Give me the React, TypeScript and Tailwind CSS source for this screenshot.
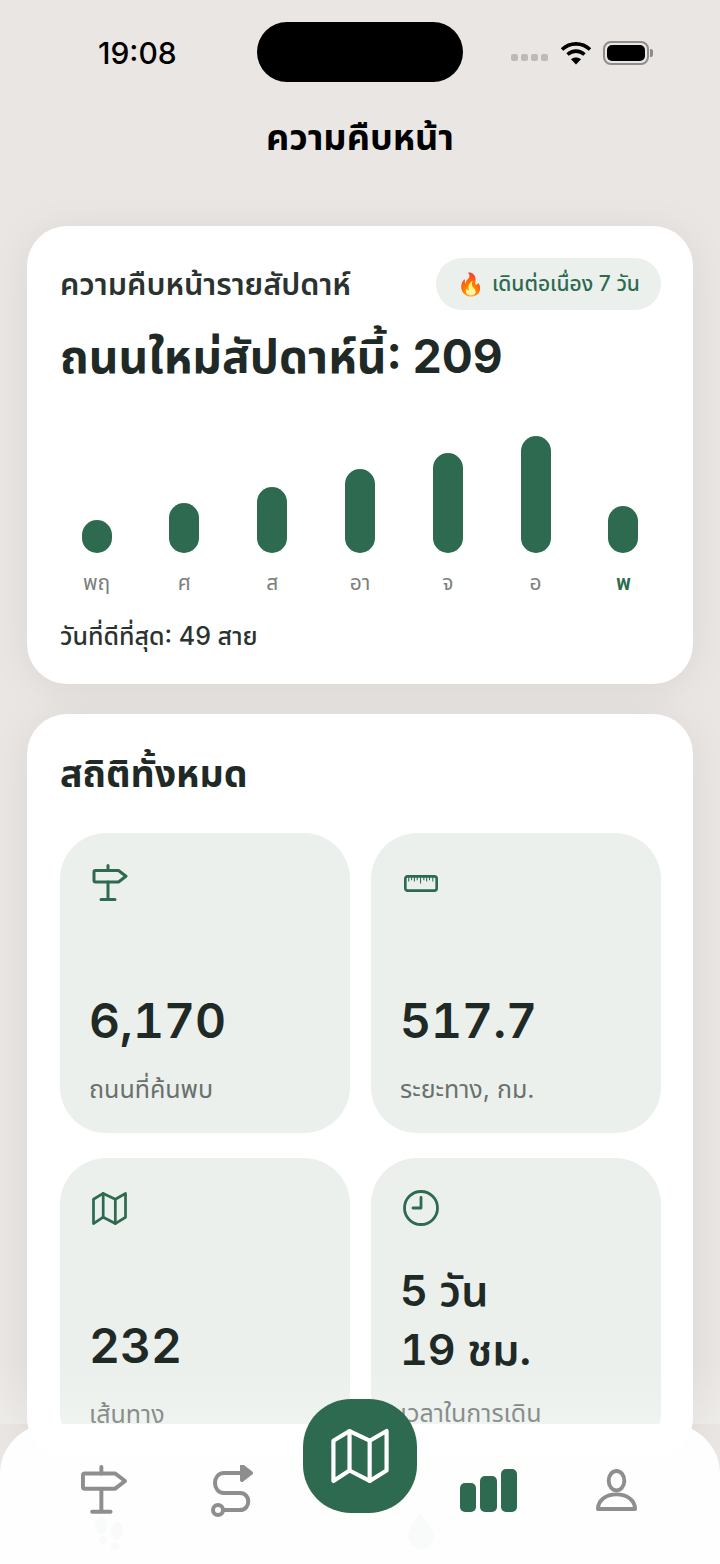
import type { ReactNode } from 'react'

const BARS = [
  { label: 'พฤ', height: 33 },
  { label: 'ศ', height: 50 },
  { label: 'ส', height: 66 },
  { label: 'อา', height: 84 },
  { label: 'จ', height: 100 },
  { label: 'อ', height: 117 },
  { label: 'พ', height: 47, today: true },
]

function SignIcon({ className }: { className?: string }) {
  return (
    <svg viewBox="0 0 36 38" fill="none" stroke="currentColor" strokeWidth="3" strokeLinecap="round" strokeLinejoin="round" className={className}>
      <path d="M16 1.5v5M16 18v17.5M9 35.5h14" />
      <path d="M2 8a1.5 1.5 0 0 1 1.5-1.5H26.5L34 12.2 26.5 18H3.5A1.5 1.5 0 0 1 2 16.5z" />
    </svg>
  )
}

function MapIcon({ className, strokeWidth = 2.8 }: { className?: string; strokeWidth?: number }) {
  return (
    <svg viewBox="0 0 36 34" fill="none" stroke="currentColor" strokeWidth={strokeWidth} strokeLinecap="round" strokeLinejoin="round" className={className}>
      <path d="M1.5 7.5 11.5 1.5 24 7.5 34.5 1.5v24.5L24 32.5 11.5 26 1.5 32.5z" />
      <path d="M11.5 1.5V26M24 7.5v25" />
    </svg>
  )
}

function RulerIcon() {
  return (
    <svg viewBox="0 0 36 18" fill="none" stroke="currentColor" className="h-[17px] w-9 text-[#2D6A4F]">
      <rect x="1.4" y="1.4" width="33.2" height="15.2" rx="2.5" strokeWidth="2.8" />
      <path d="M5 2v5M8 2v3.5M11 2v5M14 2v3.5M17.5 2v7M21 2v3.5M24 2v5M27 2v3.5M30.5 2v5" strokeWidth="1.1" />
    </svg>
  )
}

function ClockIcon() {
  return (
    <svg viewBox="0 0 36 36" fill="none" stroke="currentColor" strokeWidth="2.8" strokeLinecap="round" strokeLinejoin="round" className="h-9 w-9 text-[#2D6A4F]">
      <circle cx="18" cy="18" r="16.5" />
      <path d="M18 7.5V18h-8" />
    </svg>
  )
}

function StatTile({ icon, value, label, tall }: { icon: ReactNode; value: ReactNode; label: string; tall?: boolean }) {
  return (
    <div className="flex h-[300px] flex-col rounded-[46px] bg-[#EBF0EC] px-[29px] pt-[32px]">
      <div className="flex h-9 items-center pl-[3px]">{icon}</div>
      <div className={`${tall ? 'mt-[35px] text-[43px] leading-[59px]' : 'mt-[89px] text-[48px] leading-[62px]'} font-semibold tabular-nums text-[#1F2A26]`}>
        {value}
      </div>
      <div className={`${tall ? 'mt-[18px]' : 'mt-[21px]'} text-[25px] leading-[32px] text-[#6A706D]`}>{label}</div>
    </div>
  )
}

export default function App() {
  return (
    <div
      className="relative h-[1564px] w-[720px] overflow-hidden bg-[#E9E6E3]"
      style={{ fontFamily: 'Inter, "Noto Sans", "Noto Sans Thai", sans-serif' }}
    >
      {/* Status bar */}
      <div className="flex h-[105px] items-start justify-between pl-[98px] pr-[67px] pt-[22px]">
        <span className="mt-[14px] text-[30px] font-medium leading-[34px] text-black">19:08</span>
        <div className="absolute left-[257px] top-[22px] h-[60px] w-[206px] rounded-[30px] bg-black" />
        <div className="flex items-center">
          <div className="mt-[28px] flex gap-[3px]">
            {[0, 1, 2, 3].map(i => (
              <span key={i} className="h-[7px] w-[7px] rounded-[2px] bg-[#BDBBB9]" />
            ))}
          </div>
          <svg viewBox="0 0 32 24" className="ml-[12px] mt-[18px] h-[24px] w-[32px]" fill="none" stroke="#000" strokeWidth="3.6">
            <path d="M2 8.5c8-7.5 20-7.5 28 0" />
            <path d="M7.5 13.5c5-4.5 12-4.5 17 0" />
            <path d="M16 23.5l-5-5.2c2.8-2.4 7.2-2.4 10 0z" fill="#000" stroke="none" />
          </svg>
          <div className="ml-[11px] mt-[19px] flex items-center">
            <div className="h-[24px] w-[46px] rounded-[8px] border-2 border-[#8E8D8B] p-[2px]">
              <div className="h-full w-full rounded-[5px] bg-black" />
            </div>
            <div className="ml-[1px] h-[8px] w-[3px] rounded-r-[2px] bg-[#8E8D8B]" />
          </div>
        </div>
      </div>

      <h1 className="mt-[8px] text-center text-[36px] font-bold leading-[48px] text-black">ความคืบหน้า</h1>

      <div className="mt-[65px] flex flex-col gap-[30px] pl-[27px] pr-[27px]">
        {/* Weekly progress */}
        <section className="h-[458px] rounded-[40px] bg-white pl-[33px] pr-[32px] pt-[32px] shadow-[0_4px_40px_rgba(0,0,0,0.07)]">
          <div className="flex items-center justify-between">
            <h2 className="text-[30.5px] font-semibold leading-[52px] text-[#2A3330]">ความคืบหน้ารายสัปดาห์</h2>
            <div className="flex h-[52px] w-[225px] items-center justify-center gap-[8px] rounded-full bg-[#EBF0EC]">
              <span className="text-[22px] leading-none">🔥</span>
              <span className="text-[21px] font-medium text-[#2D6A4F]">เดินต่อเนื่อง 7 วัน</span>
            </div>
          </div>
          <p className="mt-[15px] text-[46px] font-bold leading-[62px] text-[#1F2A26]">ถนนใหม่สัปดาห์นี้: 209</p>
          <div className="mt-[48px] flex justify-between pl-[6.5px] pr-[7.5px]">
            {BARS.map(bar => (
              <div key={bar.label} className="flex w-[60px] flex-col items-center">
                <div className="flex h-[118px] items-end">
                  <div className="w-[30px] rounded-[15px] bg-[#2D6A4F]" style={{ height: bar.height }} />
                </div>
                <span className={`mt-[14px] text-[21px] leading-[32px] ${bar.today ? 'font-semibold text-[#2D6A4F]' : 'text-[#7B807D]'}`}>
                  {bar.label}
                </span>
              </div>
            ))}
          </div>
          <p className="mt-[19px] text-[25px] font-medium leading-[36px] text-[#2A3330]">วันที่ดีที่สุด: 49 สาย</p>
        </section>

        {/* Totals */}
        <section className="rounded-[40px] bg-white pl-[33px] pr-[32px] pt-[30px] shadow-[0_4px_40px_rgba(0,0,0,0.07)]">
          <h2 className="text-[37.5px] font-bold leading-[60px] text-[#1F2A26]">สถิติทั้งหมด</h2>
          <div className="mt-[29px] grid grid-cols-2 gap-x-[21px] gap-y-[25px]">
            <StatTile icon={<SignIcon className="h-[38px] w-9 text-[#2D6A4F]" />} value="6,170" label="ถนนที่ค้นพบ" />
            <StatTile icon={<RulerIcon />} value="517.7" label="ระยะทาง, กม." />
            <StatTile icon={<MapIcon className="h-[33px] w-[35px] text-[#2D6A4F]" />} value="232" label="เส้นทาง" />
            <StatTile
              icon={<ClockIcon />}
              value={<>5 วัน<br />19 ชม.</>}
              label="เวลาในการเดิน"
              tall
            />
          </div>
        </section>
      </div>

      {/* Fade above the tab bar */}
      <div className="absolute inset-x-0 bottom-[140px] h-[60px] bg-gradient-to-b from-white/0 to-white/25" />

      {/* Bottom tab bar */}
      <nav className="absolute inset-x-0 bottom-0 grid h-[140px] grid-cols-5 justify-items-center rounded-t-[50px] bg-white/95 px-[40px] pt-[41px]">
        <SignIcon className="h-[50px] w-[48px] text-[#8E8E8E]" />
        <svg viewBox="0 0 44 52" fill="none" stroke="#8E8E8E" strokeWidth="4" strokeLinecap="round" strokeLinejoin="round" className="h-[52px] w-[44px]">
          <path d="M32 8H14C2 8 2 28 14 28h16c11 0 11 17 0 17H14" />
          <circle cx="8" cy="45" r="5" />
          <path d="M32 1l9 7-9 7z" fill="#8E8E8E" />
        </svg>
        <div />
        <div className="mt-[4px] flex h-[43px] items-end gap-[4px]">
          <div className="h-[29px] w-[16px] rounded-[5px] bg-[#2D6A4F]" />
          <div className="h-[36px] w-[17px] rounded-[5px] bg-[#2D6A4F]" />
          <div className="h-[43px] w-[16px] rounded-[5px] bg-[#2D6A4F]" />
        </div>
        <svg viewBox="0 0 42 44" fill="none" stroke="#8E8E8E" strokeWidth="4" strokeLinejoin="round" className="mt-[4px] h-[43px] w-[41px]">
          <ellipse cx="21" cy="12" rx="8" ry="10" />
          <path d="M2 41c0-9 8-15 19-15s19 6 19 15z" />
        </svg>

        {/* Faint icons bleeding through the bar */}
        <svg viewBox="0 0 34 34" fill="#F9FAFA" className="absolute left-[92px] top-[93px] h-[34px] w-[34px]">
          <ellipse cx="9" cy="9" rx="6" ry="9" />
          <ellipse cx="11" cy="23" rx="4" ry="4" />
          <ellipse cx="25" cy="14" rx="6" ry="9" />
          <ellipse cx="23" cy="29" rx="4" ry="4" />
        </svg>
        <svg viewBox="0 0 30 38" fill="#F9FAFA" className="absolute left-[406px] top-[88px] h-[38px] w-[30px]">
          <path d="M14 0c2 8 14 13 14 24a13 13 0 0 1-26 0C2 16 9 10 14 0z" />
        </svg>
      </nav>

      {/* Center map button */}
      <div className="absolute left-[303px] top-[1399px] flex h-[114px] w-[114px] items-center justify-center rounded-[48px] bg-[#2D6A4F]">
        <MapIcon className="h-[56px] w-[58px] text-white" strokeWidth={2.6} />
      </div>
    </div>
  )
}
